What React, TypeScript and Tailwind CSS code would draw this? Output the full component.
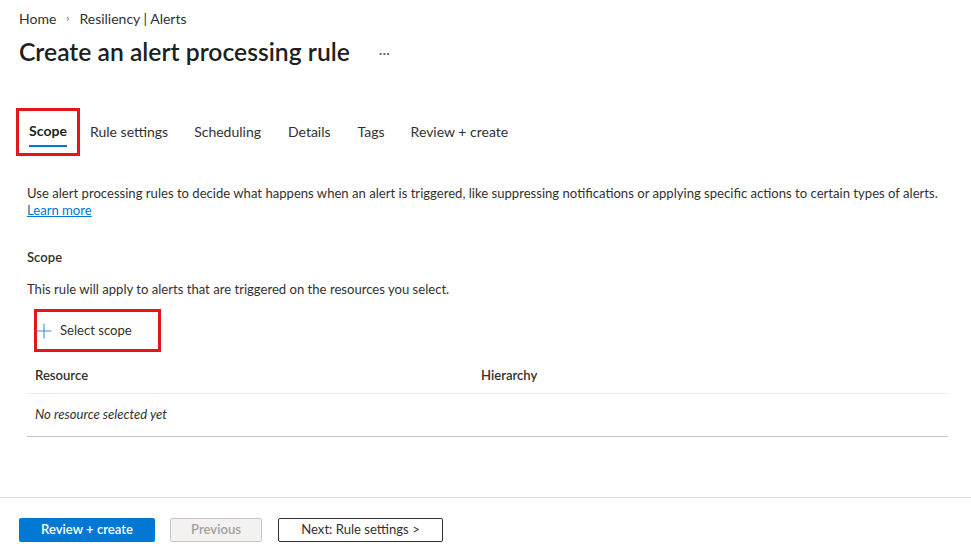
import { Plus } from 'lucide-react'

const TABS = ['Scope', 'Rule settings', 'Scheduling', 'Details', 'Tags', 'Review + create']

export default function App() {
  return (
    <div className="flex h-[553px] w-[971px] flex-col bg-white font-['Lato','Open_Sans',sans-serif] text-[13.1px] text-[#323130]">
      <div className="flex-1 overflow-hidden">
        {/* breadcrumb + title */}
        <div className="px-[19px] pt-[10px]">
          <div className="flex h-[17px] items-center text-[14px] text-[#323130]">
            <span>Home</span>
            <span className="mx-[10px] text-[11px] text-[#605e5c]">›</span>
            <span>Resiliency | Alerts</span>
          </div>
          <div className="mt-[9px] flex h-[32px] items-center">
            <h1 className="text-[24.7px] font-semibold text-[#201f1e]">Create an alert processing rule</h1>
            <span className="ml-[29px] text-[14px] text-[#605e5c]">···</span>
          </div>
        </div>

        {/* tabs */}
        <div className="mt-[40px] flex h-[48px] items-stretch gap-[26px] pl-[16px] text-[14px]">
          {TABS.map((tab, i) =>
            i === 0 ? (
              <div key={tab} className="-mr-[16px] flex w-[64px] flex-col items-center justify-center border-[3px] border-[#e3161c]">
                <span className="mt-[3px] font-bold text-[#201f1e]">{tab}</span>
                <span className="mt-[4px] h-[2px] w-[38px] bg-[#0078d4]" />
              </div>
            ) : (
              <div key={tab} className={`flex items-center pb-[1px] text-[#323130] ${tab === 'Details' ? 'mx-[1px]' : ''}`}>
                {tab}
              </div>
            )
          )}
        </div>

        {/* body */}
        <div className="px-[27px]">
          <p className="mt-[29px] leading-[17px]">
            Use alert processing rules to decide what happens when an alert is triggered, like suppressing notifications or applying specific actions to certain types of alerts.
          </p>
          <a className="block leading-[17px] text-[#0078d4] underline">Learn more</a>

          <h2 className="mt-[30px] font-semibold leading-[17px] text-[#323130]">Scope</h2>
          <p className="mt-[15px] leading-[17px]">This rule will apply to alerts that are triggered on the resources you select.</p>

          <button className="mt-[11px] ml-[7px] flex h-[43px] w-[127px] items-center gap-[4px] border-[3px] border-[#e3161c] text-[13.1px] text-[#323130]">
            <Plus className="-ml-[5px] h-[24px] w-[24px] text-[#3b8fe0]" strokeWidth={1.1} />
            <span>Select scope</span>
          </button>

          <div className="mt-[6px] w-[921px]">
            <div className="flex h-[36px] items-center border-b border-[#edebe9] pl-[8px] font-semibold">
              <span className="w-[446px]">Resource</span>
              <span>Hierarchy</span>
            </div>
            <div className="flex h-[43px] items-center border-b border-[#c8c6c4] pl-[8px] italic">
              No resource selected yet
            </div>
          </div>
        </div>
      </div>

      {/* footer */}
      <div className="flex h-[56px] items-start gap-[15px] border-t border-[#e1dfdd] px-[19px] pt-[20px]">
        <button className="h-[24px] w-[136px] rounded-[2px] bg-[#0078d4] font-semibold text-white">Review + create</button>
        <button className="h-[24px] w-[92px] rounded-[2px] border border-[#c8c6c4] bg-[#f3f2f1] font-semibold text-[#a19f9d]">
          Previous
        </button>
        <button className="ml-[1px] h-[24px] w-[165px] rounded-[2px] border border-[#323130] bg-white text-[#323130]">
          Next: Rule settings &gt;
        </button>
      </div>
    </div>
  )
}
